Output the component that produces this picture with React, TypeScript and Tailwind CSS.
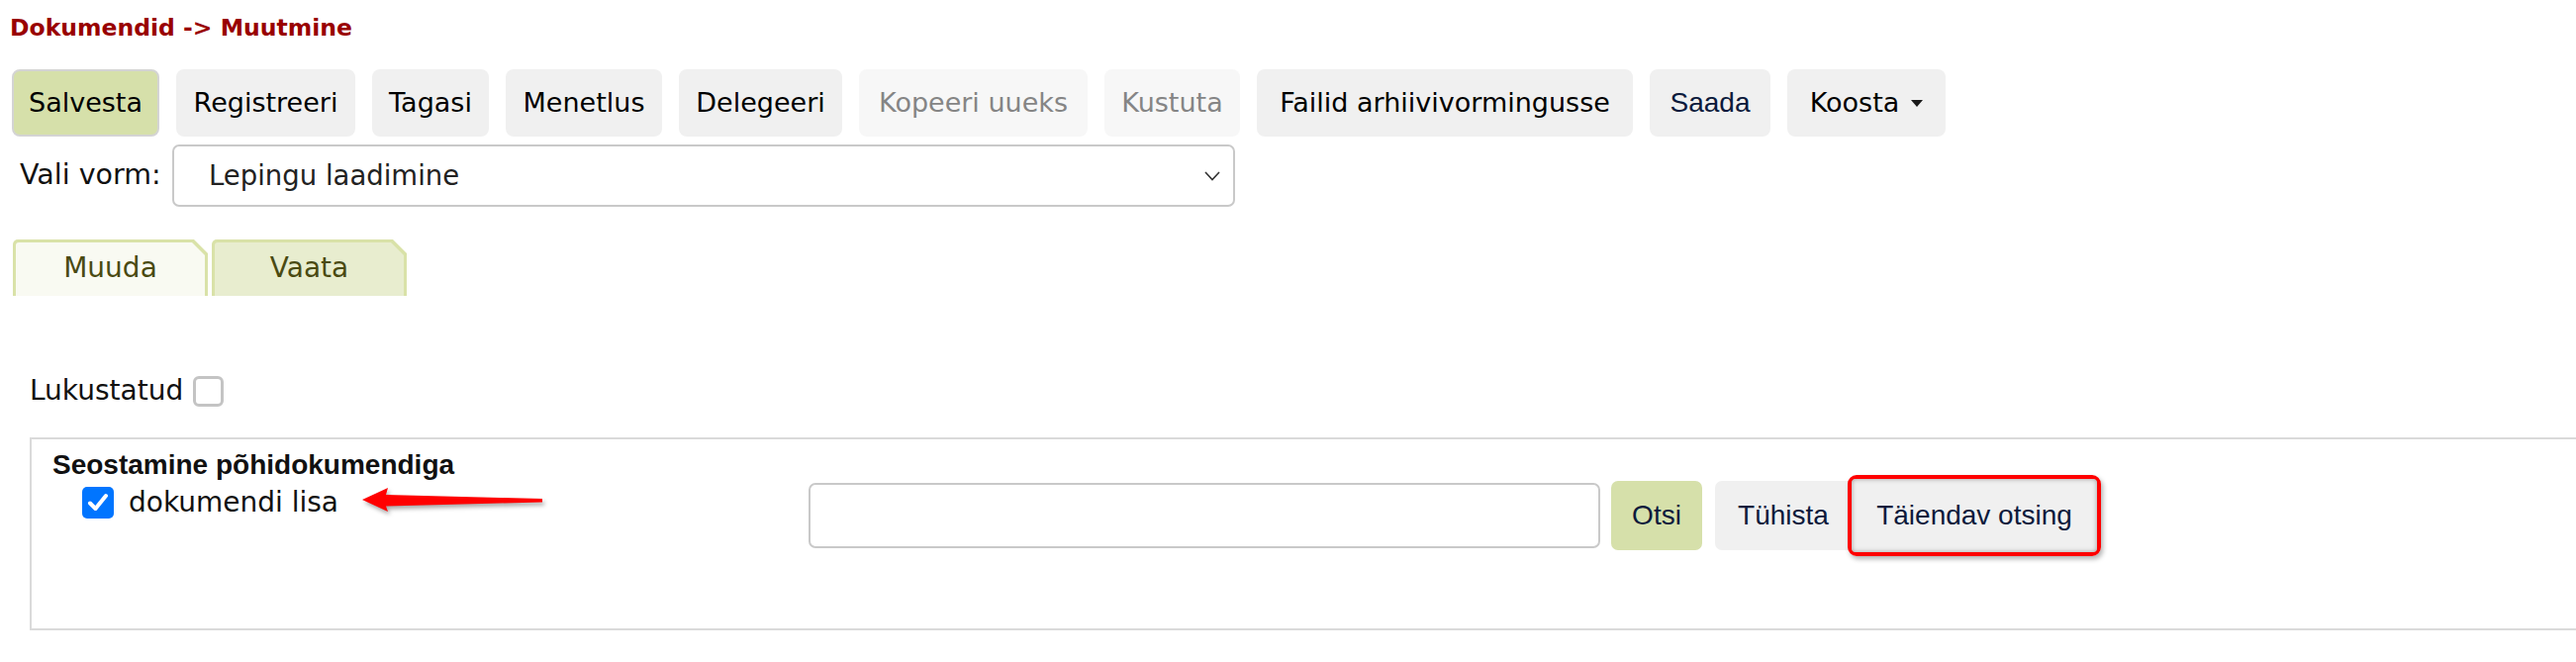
const sans = "font-['DejaVu_Sans',sans-serif]"
const arial = "font-['Liberation_Sans',Arial,sans-serif]"

type Tool = { label: string; width: string; tone: 'save' | 'plain' | 'off' | 'navy' }

const tools: Tool[] = [
  { label: 'Salvesta', width: 'w-[149px]', tone: 'save' },
  { label: 'Registreeri', width: 'w-[181px]', tone: 'plain' },
  { label: 'Tagasi', width: 'w-[118px]', tone: 'plain' },
  { label: 'Menetlus', width: 'w-[158px]', tone: 'plain' },
  { label: 'Delegeeri', width: 'w-[165px]', tone: 'plain' },
  { label: 'Kopeeri uueks', width: 'w-[231px]', tone: 'off' },
  { label: 'Kustuta', width: 'w-[137px]', tone: 'off' },
  { label: 'Failid arhiivivormingusse', width: 'w-[380px]', tone: 'plain' },
  { label: 'Saada', width: 'w-[122px]', tone: 'navy' },
]

const toneClass = {
  save: `bg-[#d6e0aa] border-2 border-[#d4d4d4] text-black ${sans} text-[27px]`,
  plain: `bg-[#f0f0f0] text-black ${sans} text-[27px]`,
  off: `bg-[#f7f7f7] text-[#858585] ${sans} text-[27px]`,
  navy: `bg-[#f0f0f0] text-[#0c1a3c] ${arial} text-[28px]`,
}

function Tab({ label, active }: { label: string; active?: boolean }) {
  return (
    <div className="h-[57px] w-[197px] rounded-tl-[5px] bg-[#d9e2a8] px-[3px] pt-[3px] [clip-path:polygon(0_0,calc(100%-14px)_0,100%_14px,100%_100%,0_100%)]">
      <div
        className={`flex h-full items-center justify-center pb-[3px] rounded-tl-[3px] text-[28px] text-[#4a4a12] ${sans} [clip-path:polygon(0_0,calc(100%-13px)_0,100%_13px,100%_100%,0_100%)] ${
          active ? 'bg-[#f9faf2]' : 'bg-[#e8edcf]'
        }`}
      >
        {label}
      </div>
    </div>
  )
}

function RedArrow() {
  return (
    <svg width="186" height="40" viewBox="0 0 186 40" className="ml-[22px] drop-shadow-[2px_3px_2px_rgba(0,0,0,0.35)]">
      <path d="M2 17 L28 5 L26 12 L184 16 L184 19.5 L26 23.5 L28 29 Z" fill="#ff0000" />
    </svg>
  )
}

export default function App() {
  return (
    <div className="min-h-[669px] w-full overflow-hidden bg-white">
      <div className={`pl-[10px] pt-[14px] text-[23.5px] font-bold leading-[28px] text-[#990000] ${sans}`}>
        Dokumendid -&gt; Muutmine
      </div>

      <div className="mt-[28px] flex gap-[17px] pl-[12px]">
        {tools.map((t) => (
          <button
            key={t.label}
            className={`flex h-[68px] items-center justify-center rounded-[8px] whitespace-nowrap ${t.width} ${toneClass[t.tone]}`}
          >
            {t.label}
          </button>
        ))}
        <button className={`flex h-[68px] w-[160px] items-center justify-center gap-[12px] rounded-[8px] bg-[#f0f0f0] text-[27px] text-black ${sans}`}>
          Koosta
          <svg width="12" height="7" viewBox="0 0 12 7">
            <path d="M0 0 L12 0 L6 7 Z" fill="#1a1a1a" />
          </svg>
        </button>
      </div>

      <div className="mt-[8px] flex items-center pl-[20px]">
        <span className={`w-[154px] text-[28.5px] text-[#111] ${sans}`}>Vali vorm:</span>
        <div className="flex h-[63px] w-[1074px] items-center justify-between rounded-[7px] border-2 border-[#c9c9c9] pl-[35px] pr-[13px]">
          <span className={`text-[27.5px] text-[#222] ${sans}`}>Lepingu laadimine</span>
          <svg width="16" height="10" viewBox="0 0 16 10">
            <path d="M1 1 L8 8.5 L15 1" fill="none" stroke="#333" strokeWidth="1.6" />
          </svg>
        </div>
      </div>

      <div className="mt-[33px] flex gap-[4px] pl-[13px]">
        <Tab label="Muuda" active />
        <Tab label="Vaata" />
      </div>

      <div className="mt-[81px] flex h-[30px] items-center gap-[10px] pl-[30px]">
        <span className={`text-[28px] text-[#111] ${sans}`}>Lukustatud</span>
        <span className="h-[31px] w-[31px] rounded-[6px] border-[3px] border-[#c4c4c4] bg-white" />
      </div>

      <div className="ml-[30px] mr-[-20px] mt-[32px] flex h-[195px] border-2 border-[#dadada] pl-[21px]">
        <div className="w-[764px] pt-[11px]">
          <div className={`text-[28px] font-bold leading-[30px] text-[#111] ${arial}`}>Seostamine põhidokumendiga</div>
          <div className="mt-[6px] flex h-[34px] items-center pl-[30px]">
            <span className="flex h-[32px] w-[32px] items-center justify-center rounded-[5px] bg-[#0075ff]">
              <svg width="22" height="20" viewBox="0 0 22 20">
                <path d="M3 10.5 L8.5 16 L19 3" fill="none" stroke="#fff" strokeWidth="4" strokeLinecap="round" strokeLinejoin="round" />
              </svg>
            </span>
            <span className={`ml-[15px] text-[28px] text-[#111] ${sans}`}>dokumendi lisa</span>
            <RedArrow />
          </div>
        </div>

        <div className="mt-[36px] flex h-[82px] items-center">
          <div className="h-[66px] w-[800px] rounded-[7px] border-2 border-[#c9c9c9] bg-white" />
          <button className={`ml-[11px] h-[70px] w-[92px] rounded-[7px] bg-[#d6e0aa] text-[28px] text-[#0c1a3c] ${arial}`}>Otsi</button>
          <button className={`ml-[13px] h-[70px] w-[138px] rounded-l-[7px] bg-[#f0f0f0] text-[28px] text-[#0c1a3c] ${arial}`}>Tühista</button>
          <div className="ml-[-4px] rounded-[9px] border-[4px] border-[#ff0000] shadow-[2px_3px_5px_rgba(0,0,0,0.3)]">
            <button className={`h-[74px] w-[248px] rounded-[4px] bg-[#f0f0f0] text-[28px] text-[#0c1a3c] shadow-[inset_0_0_5px_rgba(0,0,0,0.35)] ${arial}`}>
              Täiendav otsing
            </button>
          </div>
        </div>
      </div>
    </div>
  )
}
